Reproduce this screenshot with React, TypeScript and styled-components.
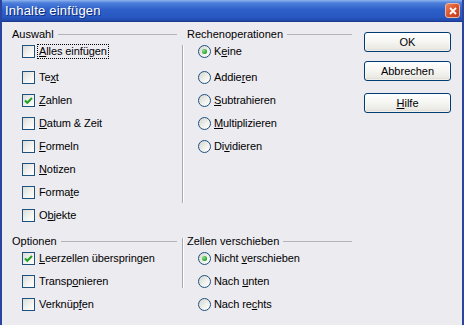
import styled, { createGlobalStyle } from 'styled-components';

const Global = createGlobalStyle`
  html, body { margin: 0; padding: 0; background: #ecebf0; }
  body { font-family: "Liberation Sans", Arial, sans-serif; font-size: 11px; color: #000; }
`;

const Window = styled.div`
  width: 464px;
  height: 325px;
  box-sizing: border-box;
  border-left: 2px solid #2a44a0;
  border-right: 2px solid #2a44a0;
  background: #ecebf0;
  display: flex;
  flex-direction: column;
  overflow: hidden;
`;

const TitleBar = styled.div`
  height: 22px;
  flex: none;
  margin: 0 -2px;
  padding: 0 5px 0 5px;
  display: flex;
  align-items: center;
  justify-content: space-between;
  background: linear-gradient(#8fb4ee 0%, #4c7fda 14%, #2e60c9 45%, #2858c2 80%, #1f47a8 100%);
  border-bottom: 1px solid #1a3a90;
  box-sizing: border-box;
`;

const Title = styled.span`
  color: #fff;
  font-size: 13px;
  text-shadow: 1px 1px 0 #0f2c7a;
  letter-spacing: 0.2px;
`;

const CloseBtn = styled.div`
  width: 15px;
  height: 15px;
  margin-right: -1px;
  flex: none;
  box-sizing: border-box;
  border: 1px solid #e8b8a4;
  border-radius: 3px;
  background-color: #d9532c;
  background-image: linear-gradient(135deg, #ec8660, #d9532c 50%, #c03a18);
  display: flex;
  align-items: center;
  justify-content: center;
`;

const Body = styled.div`
  flex: 1;
  display: grid;
  grid-template-columns: 165px 5px 170px 12px 87px;
  grid-template-rows: 207px auto;
  padding: 5px 0 0 10px;
`;

const Column = styled.div<{ $col: number; $row: number }>`
  grid-column: ${(p) => p.$col};
  grid-row: ${(p) => p.$row};
  display: flex;
  align-items: flex-start;
`;

const VLine = styled.div<{ $top: number; $height: number }>`
  width: 1px;
  flex: none;
  margin-top: ${(p) => p.$top}px;
  height: ${(p) => p.$height}px;
  background: #a9a8b0;
  box-shadow: 1px 0 0 #fff;
`;

const Group = styled.div<{ $shift?: number }>`
  flex: 1;
  display: flex;
  flex-direction: column;
  margin-left: ${(p) => p.$shift ?? 0}px;
`;

const Header = styled.div`
  height: 13px;
  display: flex;
  align-items: center;
  gap: 4px;
  white-space: nowrap;
`;

const HLine = styled.div`
  flex: 1;
  height: 1px;
  margin-top: 1px;
  background: #b4b3ba;
`;

const Row = styled.div<{ $indent: number; $gap: number; $extra?: number }>`
  height: 23px;
  display: flex;
  align-items: center;
  gap: ${(p) => p.$gap}px;
  padding-left: ${(p) => p.$indent}px;
  margin-bottom: ${(p) => p.$extra ?? 0}px;
  white-space: nowrap;
`;

const Box = styled.div`
  width: 13px;
  height: 13px;
  flex: none;
  box-sizing: border-box;
  border: 1px solid #1c5180;
  background: linear-gradient(135deg, #dcdcd7 0%, #f4f4f1 60%, #fff 100%);
  display: flex;
  align-items: center;
  justify-content: center;
`;

const Circle = styled.div`
  width: 13px;
  height: 13px;
  flex: none;
  box-sizing: border-box;
  border: 1px solid #1c5180;
  border-radius: 50%;
  background: linear-gradient(135deg, #d6d6d0 0%, #f2f2ee 60%, #fff 100%);
  display: flex;
  align-items: center;
  justify-content: center;
`;

const Dot = styled.div`
  width: 5px;
  height: 5px;
  border-radius: 50%;
  background: radial-gradient(circle at 35% 35%, #8ee08e, #21a121 70%);
`;

const Label = styled.span<{ $focus?: boolean }>`
  line-height: 13px;
  letter-spacing: -0.1px;
  outline: ${(p) => (p.$focus ? '1px dotted #000' : 'none')};
  padding: 0 1px;
  margin-left: -1px;
`;

const Key = styled.u`
  text-decoration: underline;
  text-underline-offset: 1px;
`;

const Buttons = styled.div`
  grid-column: 5;
  grid-row: 1;
  display: flex;
  flex-direction: column;
  padding-top: 5px;
`;

const Button = styled.div<{ $gap: number }>`
  height: 20px;
  margin-bottom: ${(p) => p.$gap}px;
  box-sizing: border-box;
  border: 1px solid #003c74;
  border-radius: 3px;
  background: linear-gradient(#ffffff 0%, #f5f5f2 50%, #ebeae4 85%, #d8d4cb 100%);
  box-shadow: inset 0 0 0 1px rgba(255, 255, 255, 0.6);
  display: flex;
  align-items: center;
  justify-content: center;
`;

const Check = () => (
  <svg width="9" height="9" viewBox="0 0 9 9">
    <path d="M1 4.5 L3.3 6.8 L8 2" fill="none" stroke="#21a121" strokeWidth="2" />
  </svg>
);

type Opt = { pre: string; key: string; post: string; on?: boolean; focus?: boolean };

const t = (s: string, i: number, on = false, focus = false): Opt => ({
  pre: s.slice(0, i),
  key: s[i],
  post: s.slice(i + 1),
  on,
  focus,
});

const auswahl = [
  t('Alles einfügen', 0, false, true),
  t('Text', 2),
  t('Zahlen', 0, true),
  t('Datum & Zeit', 0),
  t('Formeln', 0),
  t('Notizen', 0),
  t('Formate', 5),
  t('Objekte', 1),
];

const rechen = [
  t('Keine', 1, true),
  t('Addieren', 5),
  t('Subtrahieren', 0),
  t('Multiplizieren', 0),
  t('Dividieren', 2),
];

const optionen = [t('Leerzellen überspringen', 0, true), t('Transponieren', 6), t('Verknüpfen', 7)];

const zellen = [t('Nicht verschieben', 6, true), t('Nach unten', 5), t('Nach rechts', 7)];

const Text = ({ o }: { o: Opt }) => (
  <Label $focus={o.focus}>
    {o.pre}
    <Key>{o.key}</Key>
    {o.post}
  </Label>
);

const CheckList = ({ items, first }: { items: Opt[]; first?: number }) => (
  <>
    {items.map((o, i) => (
      <Row key={i} $indent={10} $gap={4} $extra={i === 0 ? first : 0}>
        <Box>{o.on && <Check />}</Box>
        <Text o={o} />
      </Row>
    ))}
  </>
);

const RadioList = ({ items, first }: { items: Opt[]; first?: number }) => (
  <>
    {items.map((o, i) => (
      <Row key={i} $indent={11} $gap={3} $extra={i === 0 ? first : 0}>
        <Circle>{o.on && <Dot />}</Circle>
        <Text o={o} />
      </Row>
    ))}
  </>
);

export default function App() {
  return (
    <>
      <Global />
      <Window>
        <TitleBar>
          <Title>Inhalte einfügen</Title>
          <CloseBtn>
            <svg width="8" height="8" viewBox="0 0 8 8">
              <path d="M1 1 L7 7 M7 1 L1 7" stroke="#fff" strokeWidth="1.8" />
            </svg>
          </CloseBtn>
        </TitleBar>
        <Body>
          <Column $col={1} $row={1}>
            <Group>
              <Header>
                Auswahl
                <HLine />
              </Header>
              <CheckList items={auswahl} first={3} />
            </Group>
          </Column>
          <Column $col={3} $row={1}>
            <VLine $top={18} $height={158} />
            <Group $shift={4}>
              <Header>
                Rechenoperationen
                <HLine />
              </Header>
              <RadioList items={rechen} first={3} />
            </Group>
          </Column>
          <Buttons>
            <Button $gap={9}>OK</Button>
            <Button $gap={12}>Abbrechen</Button>
            <Button $gap={0}>
              <span>
                <Key>H</Key>ilfe
              </span>
            </Button>
          </Buttons>
          <Column $col={1} $row={2}>
            <Group>
              <Header>
                Optionen
                <HLine />
              </Header>
              <CheckList items={optionen} />
            </Group>
          </Column>
          <Column $col={3} $row={2}>
            <VLine $top={4} $height={50} />
            <Group $shift={4}>
              <Header>
                Zellen verschieben
                <HLine />
              </Header>
              <RadioList items={zellen} />
            </Group>
          </Column>
        </Body>
      </Window>
    </>
  );
}
